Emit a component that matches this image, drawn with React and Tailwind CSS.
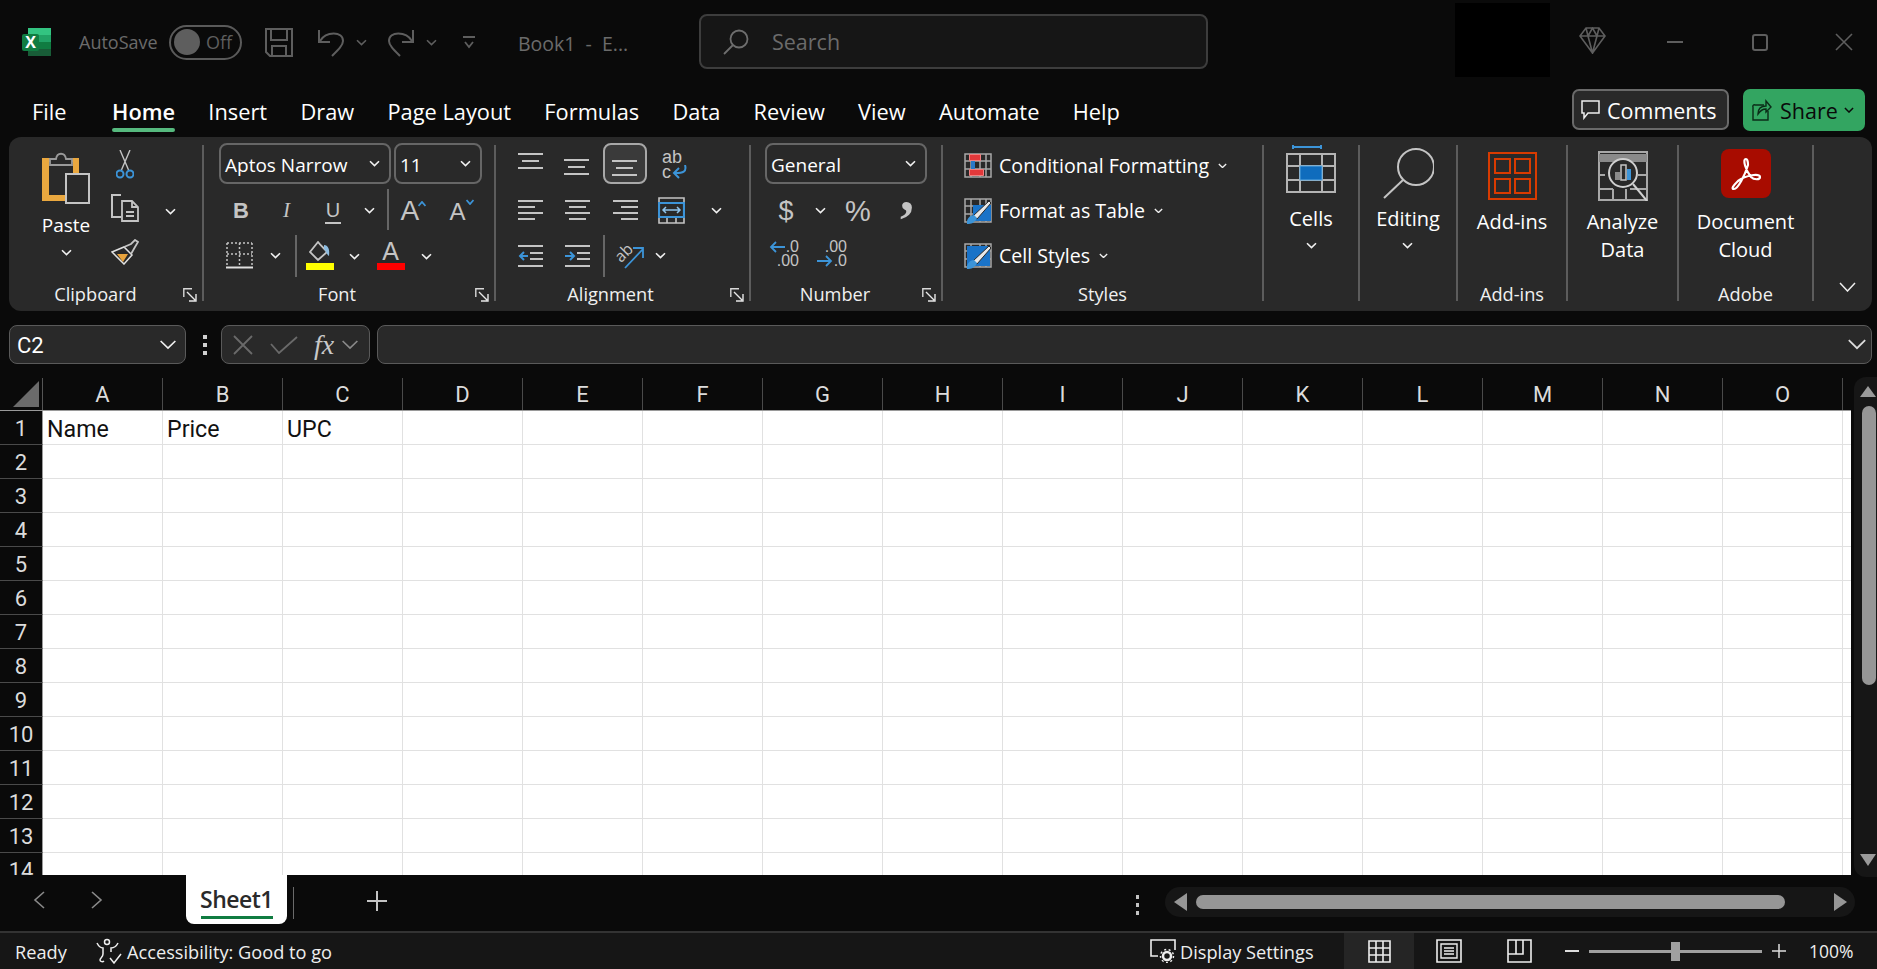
const GREY = '#c4c4c4';
const BLUE = '#3c94d8';
const COLS = 'ABCDEFGHIJKLMNO'.split('');
const ROWS = [1, 2, 3, 4, 5, 6, 7, 8, 9, 10, 11, 12, 13, 14];

function Chev({ className = '', color = '#f0f0f0', w = 11 }) {
  return (
    <svg width={w} height={(w * 7) / 11} viewBox="0 0 11 7" fill="none" className={`shrink-0 ${className}`}>
      <path d="M1 1.2 5.5 5.6 10 1.2" stroke={color} strokeWidth={w > 14 ? 1 : 1.6} />
    </svg>
  );
}

function Launcher() {
  return (
    <svg width="14" height="14" viewBox="0 0 14 14" fill="none" className="shrink-0">
      <path d="M.8 9V.8H9" stroke="#d8d8d8" strokeWidth="1.4" />
      <path d="M4 4l8 8M6 13h7V6" stroke="#e8e8e8" strokeWidth="1.4" />
    </svg>
  );
}

function Sep() {
  return <div className="w-[2px] h-[156px] my-[8px] bg-[#5c5c5c] shrink-0" />;
}

function Group({ w, label, launcher, children, labelClass = '' }) {
  return (
    <div className="flex shrink-0" style={{ width: w }}>
      <div className="flex-1 min-w-0 flex flex-col">
        <div className="h-[141px] pt-[6px]">{children}</div>
        <div className="h-[33px] flex items-center">
          <div className={`flex-1 text-center text-[18.2px] text-[#f0f0f0] whitespace-nowrap ${labelClass}`}>{label}</div>
          {launcher && (
            <div className="ml-[5px] mr-[5px]">
              <Launcher />
            </div>
          )}
        </div>
      </div>
      <Sep />
    </div>
  );
}

function Row({ children, className = '' }) {
  return <div className={`h-[45px] flex items-center ${className}`}>{children}</div>;
}

function Select({ className, text }) {
  return (
    <div className={`h-[41px] -mt-[4px] shrink-0 flex items-center justify-between pl-[4px] pr-[9px] rounded-[8px] border-2 border-[#666666] ${className}`}>
      <span className="pt-[3px] text-[19px] text-white whitespace-nowrap">{text}</span>
      <Chev />
    </div>
  );
}

function Lines({ rows, w = 26, h = 24, color = GREY, sw = 2 }) {
  // rows: [x1, x2, y]
  return (
    <svg width={w} height={h} viewBox={`0 0 ${w} ${h}`} fill="none" className="shrink-0">
      {rows.map((r, i) => (
        <path key={i} d={`M${r[0]} ${r[2]}H${r[1]}`} stroke={color} strokeWidth={sw} />
      ))}
    </svg>
  );
}

function ExcelLogo() {
  return (
    <svg width="29" height="28" viewBox="0 0 29 28" className="shrink-0">
      <rect x="6" y="0" width="23" height="28" rx="2" fill="#21a366" />
      <rect x="6" y="0" width="23" height="7" fill="#33c481" />
      <rect x="17" y="14" width="12" height="7" fill="#107c41" />
      <rect x="6" y="21" width="23" height="7" fill="#185c37" />
      <rect x="0" y="6" width="17" height="17" rx="2" fill="#107c41" />
      <text x="8.5" y="20" textAnchor="middle" fill="#fff" fontSize="16" fontWeight="700" fontFamily="'Open Sans',sans-serif">X</text>
    </svg>
  );
}

function TitleBar() {
  const stroke = '#5e5e5e';
  return (
    <div className="h-[84px] flex items-center shrink-0">
      <div className="ml-[22px]"><ExcelLogo /></div>
      <span className="ml-[28px] text-[18px] text-[#6b6b6b] w-[90px] whitespace-nowrap">AutoSave</span>
      <div className="w-[73px] h-[35px] rounded-full border-2 border-[#5a5a5a] flex items-center pl-[3px]">
        <div className="w-[26px] h-[26px] rounded-full bg-[#5e5e5e]" />
        <span className="ml-[6px] text-[18px] text-[#5e5e5e]">Off</span>
      </div>
      <svg width="28" height="29" viewBox="0 0 28 29" fill="none" className="ml-[23px] shrink-0">
        <path d="M1 1h26v27H5l-4-4zM6 1v11h16V1M7 28V18h14v10" stroke={stroke} strokeWidth="2" />
      </svg>
      <svg width="26" height="29" viewBox="0 0 26 29" fill="none" className="ml-[25px] shrink-0">
        <path d="M1 2v12h11M2 13C8 3 25 3 25 13c0 4-4 8-11 15" stroke={stroke} strokeWidth="2" />
      </svg>
      <Chev color={stroke} className="ml-[12px]" />
      <svg width="26" height="29" viewBox="0 0 26 29" fill="none" className="ml-[21px] shrink-0">
        <path d="M25 2v12H14M24 13C18 3 1 3 1 13c0 4 4 8 11 15" stroke={stroke} strokeWidth="2" />
      </svg>
      <Chev color={stroke} className="ml-[12px]" />
      <svg width="14" height="13" viewBox="0 0 14 13" fill="none" className="ml-[25px] shrink-0">
        <path d="M1 1h12M3 6l4 5 4-5" stroke={stroke} strokeWidth="1.8" />
      </svg>
      <span className="ml-[42px] w-[181px] mt-[3px] text-[19.5px] text-[#6b6b6b] whitespace-nowrap">Book1&nbsp; -&nbsp; E...</span>
      <div className="w-[509px] h-[55px] -mt-[1px] rounded-[8px] border-2 border-[#3d3d3d] bg-[#161616] flex items-center pl-[22px]">
        <svg width="26" height="26" viewBox="0 0 26 26" fill="none" className="shrink-0">
          <circle cx="16" cy="10" r="8.5" stroke="#6e6e6e" strokeWidth="1.8" />
          <path d="M10 16 1 25" stroke="#6e6e6e" strokeWidth="1.8" />
        </svg>
        <span className="ml-[23px] pt-[2px] text-[21.5px] text-[#6b6b6b]">Search</span>
      </div>
      <div className="ml-[247px] w-[95px] h-[74px] -mt-[4px] bg-black" />
      <svg width="27" height="27" viewBox="0 0 27 27" fill="none" className="ml-[29px] -mt-[4px] shrink-0">
        <path d="M7 1h13l6 8-12.500 17L1 9zM1 9h25M9 9l4.500 17L18 9M7 1l2 8 4.500-8 4.500 8 2-8" stroke={stroke} strokeWidth="1.6" />
      </svg>
      <div className="ml-[61px] w-[16px] h-[2px] bg-[#5e5e5e]" />
      <div className="ml-[69px] w-[16px] h-[17px] rounded-[3px] border-2 border-[#5e5e5e]" />
      <svg width="18" height="18" viewBox="0 0 18 18" fill="none" className="ml-[67px] shrink-0">
        <path d="M1 1l16 16M17 1 1 17" stroke={stroke} strokeWidth="1.6" />
      </svg>
    </div>
  );
}

function TabBar() {
  const tabs = ['Home', 'Insert', 'Draw', 'Page Layout', 'Formulas', 'Data', 'Review', 'View', 'Automate', 'Help'];
  return (
    <div className="h-[53px] flex items-start shrink-0">
      <span className="ml-[32px] mt-[14px] leading-[28px] text-[21.8px] text-white w-[80px]">File</span>
      <div className="flex gap-[33.300px]">
        {tabs.map((t) => (
          <div key={t} className="flex flex-col">
            <span className={`mt-[14px] leading-[28px] text-[21.8px] text-white whitespace-nowrap ${t === 'Home' ? 'font-semibold' : ''}`}>{t}</span>
            {t === 'Home' && <div className="mt-[2px] h-[4px] rounded-full bg-[#56b97e]" />}
          </div>
        ))}
      </div>
      <div className="ml-auto mt-[5px] w-[157px] h-[41px] rounded-[7px] border-2 border-[#6a6a6a] bg-[#292929] flex items-center pl-[7px]">
        <svg width="19" height="20" viewBox="0 0 19 20" fill="none" className="shrink-0">
          <path d="M1 1h17v12H7l-4 5v-5H1z" stroke="#eee" strokeWidth="1.5" />
        </svg>
        <span className="ml-[7px] pt-[3px] text-[21.5px] text-white whitespace-nowrap">Comments</span>
      </div>
      <div className="ml-[14px] mr-[12px] mt-[5px] w-[122px] h-[42px] rounded-[7px] bg-[#33a561] flex items-center pl-[9px]">
        <svg width="20" height="24" viewBox="0 0 20 24" fill="none" className="shrink-0">
          <path d="M12 7H3a1.500 1.500 0 0 0-2 2v13h15v-9" stroke="#0b2c18" strokeWidth="1.4" />
          <path d="M6 16c0-6 3-8 8-8V3l5 6-5 5v-3c-4 0-6 2-8 5z" stroke="#0b2c18" strokeWidth="1.4" />
        </svg>
        <span className="ml-[8px] pt-[2px] text-[21.5px] text-[#0a0a0a] whitespace-nowrap">Share</span>
        <Chev color="#0a0a0a" w={10} className="ml-[6px]" />
      </div>
    </div>
  );
}

function Clipboard() {
  return (
    <Group w={195} label="Clipboard" launcher labelClass="pl-[4px]">
      <div className="flex">
        <div className="ml-[33px] w-[48px] flex flex-col items-center">
          <svg width="48" height="52" viewBox="0 0 48 52" fill="none" className="mt-[9px]">
            <path d="M0 6H37V21H23V49H0z" fill="#eaa83f" />
            <path d="M7 10H31V21H23V43H7z" fill="#292929" />
            <path d="M8 13H30V7H24C23 0 15 0 14 7H8z" fill="#292929" stroke="#9a9a9a" strokeWidth="1.800" />
            <path d="M24 22h23v29H24z" fill="#292929" stroke={GREY} strokeWidth="2" />
          </svg>
          <span className="mt-[8px] text-[19px] leading-[26px] text-white">Paste</span>
          <Chev className="mt-[11px]" />
        </div>
        <div className="ml-[21px] w-[28px] flex flex-col items-center">
          <svg width="18" height="29" viewBox="0 0 18 29" fill="none" className="mt-[7px]">
            <path d="M4 0l9 21M14 0 5 21" stroke={GREY} strokeWidth="1.400" />
            <circle cx="4" cy="24" r="3.500" stroke={BLUE} strokeWidth="2" />
            <circle cx="14" cy="24" r="3.500" stroke={BLUE} strokeWidth="2" />
          </svg>
          <svg width="28" height="28" viewBox="0 0 28 28" fill="none" className="mt-[15px]">
            <path d="M10 1H1v22h9" stroke={GREY} strokeWidth="2" />
            <path d="M11 7h10l6 6v14H11zM21 7v6h6M15 18h8M15 22h8" stroke={GREY} strokeWidth="1.800" />
          </svg>
          <svg width="28" height="26" viewBox="0 0 28 26" fill="none" className="mt-[17px]">
            <path d="M1 13 13 8l8 8-8 9z" fill="#292929" stroke="#e0e0e0" strokeWidth="1.500" />
            <path d="M6 15 17 15 12 23z" fill="#e8a33d" />
            <path d="M13 8 20 5l4-4 3 2-3 5-4 7" stroke={GREY} strokeWidth="1.800" />
          </svg>
        </div>
        <Chev className="ml-[26px] mt-[65px]" />
      </div>
    </Group>
  );
}

function FontGroup() {
  return (
    <Group w={292} label="Font" launcher>
      <Row className="pl-[15px]">
        <Select className="w-[172px]" text="Aptos Narrow" />
        <Select className="w-[88px] ml-[3px]" text="11" />
      </Row>
      <Row>
        <span className="ml-[29px] w-[14px] text-[22px] font-bold text-[#c4c4c4] font-['Liberation_Sans']">B</span>
        <span className="ml-[36px] w-[14px] text-[21px] italic text-[#c4c4c4] font-['Liberation_Serif']">I</span>
        <span className="ml-[28px] w-[16px] text-[20px] text-[#c4c4c4] border-b-2 border-[#c4c4c4] leading-[24px] text-center font-['Liberation_Sans']">U</span>
        <Chev className="ml-[23px]" />
        <div className="ml-[12px] w-[1.500px] h-[41px] bg-[#666666] -mt-[3px]" />
        <div className="ml-[12px] w-[28px] flex items-start">
          <span className="text-[28px] leading-[30px] text-[#c4c4c4] font-['Liberation_Sans']">A</span>
          <svg width="8" height="6" viewBox="0 0 8 6" fill="none" className="-ml-[1px] mt-[5px] shrink-0"><path d="M.5 5 4 1l3.500 4" stroke={BLUE} strokeWidth="1.800" /></svg>
        </div>
        <div className="ml-[21px] w-[26px] flex items-start">
          <span className="text-[24px] leading-[30px] mt-[3px] text-[#c4c4c4] font-['Liberation_Sans']">A</span>
          <svg width="8" height="6" viewBox="0 0 8 6" fill="none" className="mt-[5px] shrink-0"><path d="M.5 1 4 5l3.500-4" stroke={BLUE} strokeWidth="1.800" /></svg>
        </div>
      </Row>
      <Row>
        <svg width="27" height="27" viewBox="0 0 27 27" fill="none" className="ml-[22px] shrink-0">
          <path d="M1 1h25M1 1v22M26 1v22M13.500 1v22M1 12h25" stroke="#c4c4c4" strokeWidth="1.500" strokeDasharray="2 2" />
          <path d="M0 25.500h27" stroke="#e0e0e0" strokeWidth="2" />
        </svg>
        <Chev className="ml-[17px]" />
        <div className="ml-[14px] w-[1.500px] h-[42px] bg-[#666666]" />
        <div className="ml-[9px] w-[28px] flex flex-col items-center">
          <svg width="22" height="21" viewBox="0 0 22 21" fill="none">
            <path d="M9 1 1 11l8 8 9-8c-1-2-6-6-9-10z" stroke={GREY} strokeWidth="1.800" />
            <path d="M15 4c4 0 6 4 5 11-2-1-3-5-5-7z" fill="#8dbce0" />
          </svg>
          <div className="w-[28px] h-[7px] mt-[1px] bg-[#ffff00]" />
        </div>
        <Chev className="ml-[15px] mt-[2px]" />
        <div className="ml-[17px] w-[28px] flex flex-col items-center">
          <span className="text-[25px] leading-[21px] text-[#c4c4c4] font-['Liberation_Sans']">A</span>
          <div className="w-[28px] h-[7px] mt-[1px] bg-[#ff0000]" />
        </div>
        <Chev className="ml-[16px] mt-[2px]" />
      </Row>
    </Group>
  );
}

function Alignment() {
  const L = [
    [0, 25, 2],
    [0, 17, 8],
    [0, 25, 14],
    [0, 17, 20],
  ];
  const C = [
    [0, 25, 2],
    [4, 21, 8],
    [0, 25, 14],
    [4, 21, 20],
  ];
  const R = [
    [0, 25, 2],
    [8, 25, 8],
    [0, 25, 14],
    [8, 25, 20],
  ];
  const V = [
    [0, 25, 2],
    [4, 21, 9],
    [0, 25, 16],
  ];
  return (
    <Group w={255} label="Alignment" launcher>
      <Row className="pl-[22px]">
        <div className="-mt-[10px]"><Lines rows={V} h={18} /></div>
        <div className="ml-[20px] mt-[2px]"><Lines rows={V} h={18} /></div>
        <div className="ml-[13px] -mt-[4px] w-[44px] h-[41px] rounded-[8px] border-2 border-[#a8a8a8] bg-[#3a3a3a] flex items-end justify-center pb-[5px]">
          <Lines rows={V} h={18} />
        </div>
        <div className="ml-[15px] -mt-[3px] flex flex-col w-[26px] text-[18px] leading-[14px] text-[#c4c4c4] font-['Liberation_Sans']">
          <span>ab</span>
          <div className="flex items-center mt-[1px]">
            <span>c</span>
            <svg width="16" height="14" viewBox="0 0 16 14" fill="none" className="shrink-0">
              <path d="M14 0c2 7-2 8-10 8M8 3 3 8l5 5" stroke={BLUE} strokeWidth="2" />
            </svg>
          </div>
        </div>
      </Row>
      <Row className="pl-[22px]">
        <Lines rows={L} />
        <div className="ml-[21px]"><Lines rows={C} /></div>
        <div className="ml-[22px]"><Lines rows={R} /></div>
        <svg width="27" height="27" viewBox="0 0 27 27" fill="none" className="ml-[19px] shrink-0">
          <path d="M1 1h25v25H1zM1 20h25M9 20v6M18 20v6" stroke={GREY} strokeWidth="1.600" />
          <path d="M1 6h25v14H1z" fill="#292929" stroke={BLUE} strokeWidth="2.200" />
          <path d="M5 13h17M8 10l-3 3 3 3M19 10l3 3-3 3" stroke="#8fc4ec" strokeWidth="1.500" />
        </svg>
        <Chev className="ml-[26px]" />
      </Row>
      <Row className="pl-[22px]">
        <svg width="25" height="24" viewBox="0 0 25 24" fill="none" className="shrink-0">
          <path d="M0 2h25M12 9h13M12 15h13M0 22h25" stroke={GREY} strokeWidth="2" />
          <path d="M10 12H2M6 8l-4 4 4 4" stroke={BLUE} strokeWidth="2" />
        </svg>
        <svg width="25" height="24" viewBox="0 0 25 24" fill="none" className="ml-[22px] shrink-0">
          <path d="M0 2h25M12 9h13M12 15h13M0 22h25" stroke={GREY} strokeWidth="2" />
          <path d="M0 12h8M5 8l4 4-4 4" stroke={BLUE} strokeWidth="2" />
        </svg>
        <div className="ml-[13px] w-[1.500px] h-[42px] bg-[#666666]" />
        <svg width="30" height="28" viewBox="0 0 30 28" fill="none" className="ml-[10px] shrink-0">
          <text x="0" y="17" fontSize="16" fill={GREY} fontFamily="'Open Sans',sans-serif" transform="rotate(-45 8 12)">ab</text>
          <path d="M10 26 28 7M18 6h10v10" stroke={BLUE} strokeWidth="1.800" />
        </svg>
        <Chev className="ml-[10px]" />
      </Row>
    </Group>
  );
}

function NumberGroup() {
  return (
    <Group w={192} label="Number" launcher labelClass="pl-[2px]">
      <Row className="pl-[14px]">
        <Select className="w-[162px]" text="General" />
      </Row>
      <Row>
        <span className="ml-[26px] w-[18px] text-[27px] leading-[30px] text-[#c4c4c4] text-center font-['Liberation_Sans']">$</span>
        <Chev className="ml-[20px]" />
        <span className="ml-[17px] w-[30px] text-[29px] leading-[30px] text-[#c4c4c4] text-center font-['Liberation_Sans']">%</span>
        <span className="ml-[27px] w-[18px] text-[56px] leading-[30px] font-bold text-[#c4c4c4] -translate-y-[20px] font-['Liberation_Serif']">,</span>
      </Row>
      <Row>
        <div className="ml-[20px] -mt-[3px] w-[28px] flex flex-col items-end text-[16px] leading-[14px] text-[#c4c4c4] font-['Liberation_Sans']">
          <div className="flex items-center">
            <svg width="17" height="12" viewBox="0 0 17 12" fill="none" className="shrink-0"><path d="M16 6H2M7 1 2 6l5 5" stroke={BLUE} strokeWidth="1.800" /></svg>
            <span>.0</span>
          </div>
          <span>.00</span>
        </div>
        <div className="ml-[20px] -mt-[3px] w-[28px] flex flex-col items-end text-[16px] leading-[14px] text-[#c4c4c4] font-['Liberation_Sans']">
          <span>.00</span>
          <div className="flex items-center">
            <svg width="17" height="12" viewBox="0 0 17 12" fill="none" className="shrink-0"><path d="M0 6h14M9 1l5 5-5 5" stroke={BLUE} strokeWidth="1.800" /></svg>
            <span>.0</span>
          </div>
        </div>
      </Row>
    </Group>
  );
}

function TableIcon({ children }) {
  return (
    <svg width="28" height="25" viewBox="0 0 28 25" fill="none" className="shrink-0 overflow-visible">
      <path d="M1 1h26v23H1zM1 8h26M1 16h26M7 1v23M16 1v23M22 1v23" stroke="#a8a8a8" strokeWidth="1.500" />
      {children}
    </svg>
  );
}

function Brush() {
  return (
    <>
      <path d="M9 18 25 3l2 2-14 16z" fill="#e8e8e8" stroke="#292929" strokeWidth="1" />
      <path d="M3 26c-1-5 3-9 7-9l3 3c-2 5-6 6-10 6z" fill={BLUE} />
    </>
  );
}

function StyleLine({ icon, text }) {
  return (
    <Row className="pl-[21px]">
      {icon}
      <span className="ml-[7px] text-[19.6px] text-white whitespace-nowrap">{text}</span>
      <Chev w={9} className="ml-[9px]" />
    </Row>
  );
}

function Styles() {
  return (
    <Group w={321} label="Styles">
      <StyleLine
        text="Conditional Formatting"
        icon={
          <TableIcon>
            <path d="M5.500 1.500h11v6h-11z" fill="#e2383a" stroke="#f08080" strokeWidth="1" />
            <path d="M7 8h4v8H7z" fill="#2a78c8" />
            <path d="M5.500 16.500h14v6h-14z" fill="#e2383a" stroke="#f08080" strokeWidth="1" />
          </TableIcon>
        }
      />
      <StyleLine
        text="Format as Table"
        icon={
          <TableIcon>
            <path d="M9 7h18v16H9z" fill="#1a73c8" />
            <Brush />
          </TableIcon>
        }
      />
      <StyleLine
        text="Cell Styles"
        icon={
          <TableIcon>
            <path d="M3 3h23v20H3z" fill="#1a73c8" />
            <Brush />
          </TableIcon>
        }
      />
    </Group>
  );
}

function LargeLabel({ lines, chev, className = '' }) {
  return (
    <div className={`flex flex-col items-center text-[20px] leading-[28px] text-white ${className}`}>
      {lines.map((l) => (
        <span key={l} className="whitespace-nowrap">{l}</span>
      ))}
      {chev && <Chev className="mt-[9px]" />}
    </div>
  );
}

function Large() {
  return (
    <>
      <Group w={96} label="">
        <div className="flex flex-col items-center -mt-[6px]">
          <svg width="50" height="49" viewBox="0 0 50 49" fill="none" className="mt-[7px]">
            <path d="M7 3h28M7 1v4M35 1v4" stroke={BLUE} strokeWidth="2" />
            <path d="M1 10h48v38H1zM1 22h48M1 36h48M14 10v38M36 10v38" stroke="#b4b4b4" strokeWidth="2" />
            <path d="M14 22h22v14H14z" fill="#0f6cbd" stroke="#5aa8e0" strokeWidth="1" />
          </svg>
          <LargeLabel lines={['Cells']} chev className="mt-[12px]" />
        </div>
      </Group>
      <Group w={98} label="">
        <div className="flex flex-col items-center -mt-[6px]">
          <svg width="51" height="51" viewBox="0 0 51 51" fill="none" className="mt-[11px]">
            <ellipse cx="33" cy="19" rx="18" ry="18" stroke={GREY} strokeWidth="2" />
            <path d="M20 32 1 50" stroke={GREY} strokeWidth="2" />
          </svg>
          <LargeLabel lines={['Editing']} chev className="mt-[6px]" />
        </div>
      </Group>
      <Group w={110} label="Add-ins">
        <div className="flex flex-col items-center -mt-[6px]">
          <svg width="49" height="48" viewBox="0 0 49 48" fill="none" className="mt-[15px]">
            <path d="M1 1h47v46H1z" stroke="#d83b01" strokeWidth="2" />
            <path d="M7 7h15v14H7zM27 7h15v14H27zM7 27h15v14H7zM27 27h15v14H27z" stroke="#d83b01" strokeWidth="2" />
          </svg>
          <LargeLabel lines={['Add-ins']} className="mt-[8px]" />
        </div>
      </Group>
      <Group w={111} label="">
        <div className="flex flex-col items-center -mt-[6px]">
          <svg width="50" height="50" viewBox="0 0 50 50" fill="none" className="mt-[14px]">
            <path d="M1 1h48v48H1z" stroke="#a8a8a8" strokeWidth="2" />
            <path d="M1 7h48" stroke="#8a8a8a" strokeWidth="8" />
            <path d="M1 24h6M40 24h9M1 38h14M32 38h17M15 38v11M28 38v11" stroke="#a8a8a8" strokeWidth="2" />
            <circle cx="25" cy="22" r="14" fill="#292929" stroke="#d0d0d0" strokeWidth="2" />
            <path d="M35 33l14 17" stroke="#d0d0d0" strokeWidth="2" />
            <path d="M17 21h5v8h-5z" fill="#8a8a8a" />
            <path d="M23 14h5v15h-5z" stroke="#c4c4c4" strokeWidth="1.500" />
            <path d="M29 18h4v11h-4z" fill={BLUE} />
          </svg>
          <LargeLabel lines={['Analyze', 'Data']} className="mt-[7px]" />
        </div>
      </Group>
      <Group w={135} label="Adobe">
        <div className="flex flex-col items-center -mt-[6px]">
          <div className="mt-[12px] w-[50px] h-[49px] rounded-[8px] bg-[#a80c00] flex items-center justify-center">
            <svg width="32" height="34" viewBox="0 0 32 34" fill="none">
              <path d="M16 2c-4 0 0 12 5 18 3 3 9 3 9 0 0-4-14-2-22 4-5 5-7 8-4 8 4 0 11-14 14-24 0-4-1-6-2-6z" stroke="#fff" strokeWidth="2.200" />
            </svg>
          </div>
          <LargeLabel lines={['Document', 'Cloud']} className="mt-[10px]" />
        </div>
      </Group>
      <div className="flex-1 flex items-end justify-center pb-[19px] pl-[8px]">
        <svg width="17" height="10" viewBox="0 0 17 10" fill="none">
          <path d="M1 1l7.500 8L16 1" stroke="#eee" strokeWidth="1.500" />
        </svg>
      </div>
    </>
  );
}

function Ribbon() {
  return (
    <div className="ml-[9px] w-[1863px] h-[174px] shrink-0 rounded-[12px] bg-[#292929] flex">
      <Clipboard />
      <FontGroup />
      <Alignment />
      <NumberGroup />
      <Styles />
      <Large />
    </div>
  );
}

function FormulaBar() {
  return (
    <div className="mt-[14px] ml-[9px] w-[1863px] h-[39px] flex items-center shrink-0">
      <div className="w-[177px] h-[39px] rounded-[8px] border border-[#5a5a5a] bg-[#292929] flex items-center justify-between pl-[7px] pr-[8px]">
        <span className="pt-[2px] text-[22px] text-white font-['Roboto']">C2</span>
        <Chev w={18} />
      </div>
      <div className="ml-[17px] w-[4px] flex flex-col gap-[4px]">
        <div className="h-[4px] bg-[#d0d0d0]" />
        <div className="h-[4px] bg-[#d0d0d0]" />
        <div className="h-[4px] bg-[#d0d0d0]" />
      </div>
      <div className="ml-[14px] w-[149px] h-[39px] rounded-[8px] border border-[#5a5a5a] bg-[#292929] flex items-center pl-[11px]">
        <svg width="20" height="20" viewBox="0 0 20 20" fill="none" className="shrink-0"><path d="M1 1l18 18M19 1 1 19" stroke="#6a6a6a" strokeWidth="1.800" /></svg>
        <svg width="28" height="18" viewBox="0 0 28 18" fill="none" className="ml-[17px] shrink-0"><path d="M1 8l8 9L27 1" stroke="#6a6a6a" strokeWidth="1.800" /></svg>
        <span className="ml-[16px] text-[28px] leading-[30px] italic text-[#c8c8c8] font-['Liberation_Serif'] w-[25px]">fx</span>
        <Chev w={18} color="#8a8a8a" className="ml-[2px]" />
      </div>
      <div className="ml-[7px] flex-1 h-[39px] rounded-[8px] border border-[#5a5a5a] bg-[#292929] flex items-center justify-end pr-[4px]">
        <Chev w={20} color="#dcdcdc" />
      </div>
    </div>
  );
}

function Sheet() {
  const values = { A: 'Name', B: 'Price', C: 'UPC' };
  return (
    <div className="mt-[14px] h-[497px] flex shrink-0">
      <div className="w-[1851px] overflow-hidden">
        <div className="h-[33px] flex border-b border-[#9a9a9a]">
          <div className="w-[43px] shrink-0 border-r border-[#555555] flex items-end justify-end pb-[3px] pr-[3px]">
            <svg width="26" height="26" viewBox="0 0 26 26" className="shrink-0"><path d="M26 0v26H0z" fill="#6b6b6b" /></svg>
          </div>
          {COLS.map((c) => (
            <div key={c} className="w-[120px] shrink-0 border-r border-[#4a4a4a] flex items-center justify-center text-[22px] text-[#dcdcdc] font-['Roboto']">{c}</div>
          ))}
          <div className="w-[8px] shrink-0" />
        </div>
        {ROWS.map((r) => (
          <div key={r} className="h-[34px] flex">
            <div className="w-[43px] shrink-0 pt-[2px] border-r border-b border-r-[#9a9a9a] border-b-[#4a4a4a] bg-[#0a0a0a] flex items-center justify-center text-[22px] text-[#dcdcdc] font-['Roboto']">{r}</div>
            {COLS.map((c) => (
              <div key={c} className="w-[120px] shrink-0 pt-[3px] border-r border-b border-[#e1e1e1] bg-white pl-[4px] flex items-center text-[23.2px] text-[#111111] font-['Roboto']">
                {r === 1 ? values[c] : ''}
              </div>
            ))}
            <div className="w-[8px] shrink-0 border-b border-[#e1e1e1] bg-white" />
          </div>
        ))}
      </div>
      <div className="ml-[3px] -mt-[1px] mb-[-2px] flex-1 rounded-tl-[12px] rounded-bl-[12px] bg-[#161616] flex flex-col items-end pr-[1px]">
        <svg width="16" height="11" viewBox="0 0 16 11" className="mt-[9px] shrink-0"><path d="M8 0l8 11H0z" fill="#9a9a9a" /></svg>
        <div className="mt-[9px] w-[14px] h-[279px] rounded-full bg-[#969696]" />
        <svg width="16" height="12" viewBox="0 0 16 12" className="mt-auto mb-[11px] shrink-0"><path d="M8 12 16 0H0z" fill="#9a9a9a" /></svg>
      </div>
    </div>
  );
}

function SheetTabs() {
  return (
    <div className="h-[56px] flex items-start shrink-0">
      <svg width="12" height="18" viewBox="0 0 12 18" fill="none" className="ml-[33px] mt-[16px] shrink-0"><path d="M11 1 2 9l9 8" stroke="#8a8a8a" strokeWidth="1.600" /></svg>
      <svg width="12" height="18" viewBox="0 0 12 18" fill="none" className="ml-[46px] mt-[16px] shrink-0"><path d="M1 1l9 8-9 8" stroke="#8a8a8a" strokeWidth="1.600" /></svg>
      <div className="ml-[83px] w-[101px] h-[49px] rounded-b-[8px] bg-white flex flex-col items-center pt-[9px]">
        <span className="text-[23px] leading-[30px] font-semibold tracking-[-0.5px] text-[#2a2a2a]">Sheet1</span>
        <div className="mt-[2px] w-[72px] h-[3px] bg-[#107c41]" />
      </div>
      <div className="ml-[6px] mt-[12px] w-[1px] h-[32px] bg-[#6a6a6a]" />
      <svg width="20" height="20" viewBox="0 0 20 20" fill="none" className="ml-[73px] mt-[16px] shrink-0"><path d="M10 0v20M0 10h20" stroke="#c4c4c4" strokeWidth="2" /></svg>
      <div className="ml-[749px] mt-[20px] w-[3px] flex flex-col gap-[4px]">
        <div className="h-[4px] bg-[#c4c4c4]" />
        <div className="h-[4px] bg-[#c4c4c4]" />
        <div className="h-[4px] bg-[#c4c4c4]" />
      </div>
      <div className="ml-[26px] mt-[12px] w-[690px] h-[30px] rounded-full bg-[#161616] flex items-center pl-[9px] pr-[8px]">
        <svg width="13" height="18" viewBox="0 0 13 18" className="shrink-0"><path d="M0 9 13 0v18z" fill="#969696" /></svg>
        <div className="ml-[9px] w-[589px] h-[14px] rounded-full bg-[#969696]" />
        <svg width="13" height="18" viewBox="0 0 13 18" className="ml-auto shrink-0"><path d="M13 9 0 0v18z" fill="#969696" /></svg>
      </div>
    </div>
  );
}

function StatusBar() {
  return (
    <div className="flex-1 bg-[#161616] border-t-2 border-[#333333] flex items-center text-[18.2px] text-[#eeeeee]">
      <span className="ml-[15px] pt-[3px] w-[81px]">Ready</span>
      <svg width="26" height="26" viewBox="0 0 26 26" fill="none" className="shrink-0">
        <circle cx="11" cy="4" r="2.500" stroke="#eee" strokeWidth="1.500" />
        <path d="M1 5c2 4 5 5 6 5v6c0 3-3 4-3 6 0 2 3 2 4 1M22 5c-2 4-5 5-7 5v4M14 20l4 5 7-9" stroke="#eee" strokeWidth="1.500" />
      </svg>
      <span className="ml-[5px] pt-[3px] whitespace-nowrap">Accessibility: Good to go</span>
      <svg width="26" height="24" viewBox="0 0 26 24" fill="none" className="ml-auto shrink-0">
        <path d="M8 17H1V1h24v10" stroke="#eee" strokeWidth="1.600" />
        <circle cx="17" cy="17" r="4" stroke="#eee" strokeWidth="2.500" />
        <circle cx="17" cy="17" r="6.500" stroke="#eee" strokeWidth="1.500" strokeDasharray="2 2.500" />
      </svg>
      <span className="ml-[4px] pt-[3px] w-[164px] whitespace-nowrap">Display Settings</span>
      <div className="w-[70px] self-stretch bg-[#252525] flex items-center justify-center">
        <svg width="23" height="23" viewBox="0 0 23 23" fill="none"><path d="M1 1h21v21H1zM1 8h21M1 15h21M8 1v21M15 1v21" stroke="#eee" strokeWidth="1.600" /></svg>
      </div>
      <svg width="26" height="24" viewBox="0 0 26 24" fill="none" className="ml-[22px] shrink-0">
        <path d="M1 1h24v22H1z" stroke="#eee" strokeWidth="1.600" />
        <path d="M5 5h16v14H5zM8 9h10M8 12h10M8 15h10" stroke="#eee" strokeWidth="1.400" />
      </svg>
      <svg width="25" height="24" viewBox="0 0 25 24" fill="none" className="ml-[45px] shrink-0">
        <path d="M1 1h23v22H1zM1 15h15V1M9 1v14" stroke="#eee" strokeWidth="1.600" />
      </svg>
      <div className="ml-[33px] w-[14px] h-[2px] bg-[#dddddd]" />
      <div className="ml-[10px] w-[173px] h-[3px] bg-[#a0a0a0] flex items-center pl-[82px]">
        <div className="w-[9px] h-[19px] shrink-0 bg-[#a0a0a0]" />
      </div>
      <svg width="14" height="14" viewBox="0 0 14 14" fill="none" className="ml-[10px] shrink-0"><path d="M7 0v14M0 7h14" stroke="#dddddd" strokeWidth="1.500" /></svg>
      <span className="ml-[23px] mr-[22px] w-[46px] whitespace-nowrap text-[17.5px]">100%</span>
    </div>
  );
}

export default function App() {
  return (
    <div className="w-[1877px] h-[969px] overflow-hidden flex flex-col bg-[#0a0a0a] font-['Open_Sans','Liberation_Sans',sans-serif]">
      <TitleBar />
      <TabBar />
      <Ribbon />
      <FormulaBar />
      <Sheet />
      <SheetTabs />
      <StatusBar />
    </div>
  );
}
